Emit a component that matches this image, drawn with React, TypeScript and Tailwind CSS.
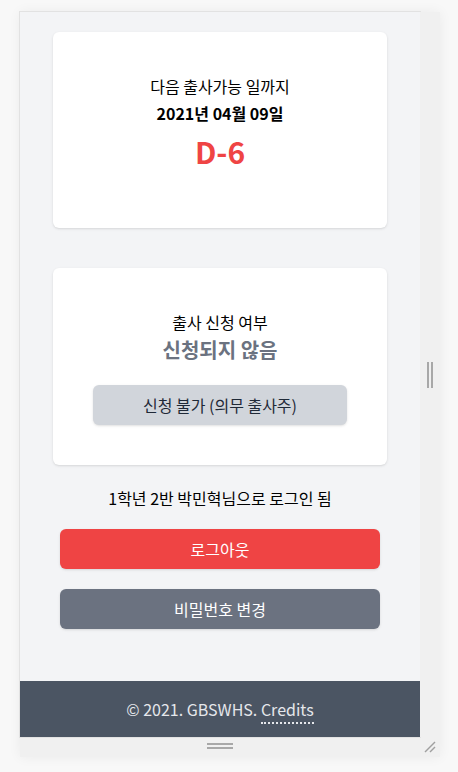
export default function App() {
  return (
    <div
      className="w-[458px] h-[772px] bg-[#f8f8f8] pt-[12px] pl-[20px] overflow-hidden"
      style={{ fontFamily: '"Noto Sans CJK KR", "Noto Sans", sans-serif' }}
    >
      <div className="w-[420px] shadow-[0_0_12px_rgba(0,0,0,0.06)]">
        <div className="flex">
          {/* Page */}
          <div className="w-[400px] h-[725px] bg-[#f3f4f6] ring-1 ring-[#e2e2e2] flex flex-col">
            <div className="flex-1 flex flex-col items-center pt-5">
              {/* Date card */}
              <div className="w-5/6 bg-white rounded-md shadow pt-[42px] pb-[59px] flex flex-col items-center">
                <p className="text-base text-black">다음 출사가능 일까지</p>
                <p className="text-base font-bold text-black mt-[3px]">2021년 04월 09일</p>
                <p className="text-3xl font-bold text-[#ef4444] mt-2">D-6</p>
              </div>

              {/* Apply card */}
              <div className="w-5/6 bg-white rounded-md shadow mt-10 pt-[42px] pb-10 flex flex-col items-center">
                <p className="text-base text-black">출사 신청 여부</p>
                <p className="text-xl font-bold text-[#6b7280] mt-0.5">신청되지 않음</p>
                <button className="w-[254px] h-10 mt-[21px] rounded-md bg-[#d1d5db] text-[#1f2937] text-base shadow-sm">
                  신청 불가 (의무 출사주)
                </button>
              </div>

              <p className="text-base text-black mt-[21px]">1학년 2반 박민혁님으로 로그인 됨</p>

              <button className="w-4/5 h-10 mt-[19px] rounded-md bg-[#ef4444] text-white text-base shadow-sm">
                로그아웃
              </button>
              <button className="w-4/5 h-10 mt-5 rounded-md bg-[#6b7280] text-white text-base shadow-sm">
                비밀번호 변경
              </button>
            </div>

            {/* Footer */}
            <footer className="h-14 bg-[#4b5563] flex items-center justify-center text-base text-[#e5e7eb]">
              <span>
                © 2021. GBSWHS.{" "}
                <span className="border-b-2 border-dotted border-[#e5e7eb] leading-none pb-[1px]">Credits</span>
              </span>
            </footer>
          </div>

          {/* Right resize handle */}
          <div className="w-5 h-[725px] bg-[#f0f0f0] flex items-center justify-center">
            <div className="flex gap-[2px] mt-[1px]">
              <div className="w-[2px] h-[26px] bg-[#a8a8a8]" />
              <div className="w-[2px] h-[26px] bg-[#a8a8a8]" />
            </div>
          </div>
        </div>

        {/* Bottom resize handle */}
        <div className="h-5 bg-[#f0f0f0] flex items-center">
          <div className="w-[400px] flex flex-col items-center gap-[2px] mt-[-2px]">
            <div className="w-[26px] h-[2px] bg-[#a8a8a8]" />
            <div className="w-[26px] h-[2px] bg-[#a8a8a8]" />
          </div>
          <div className="w-5 h-5 flex items-center justify-center">
            <svg width="14" height="14" viewBox="0 0 14 14">
              <line x1="2" y1="12" x2="12" y2="2" stroke="#a0a0a0" strokeWidth="1.5" />
              <line x1="7" y1="12" x2="12" y2="7" stroke="#a0a0a0" strokeWidth="1.5" />
            </svg>
          </div>
        </div>
      </div>
    </div>
  );
}
